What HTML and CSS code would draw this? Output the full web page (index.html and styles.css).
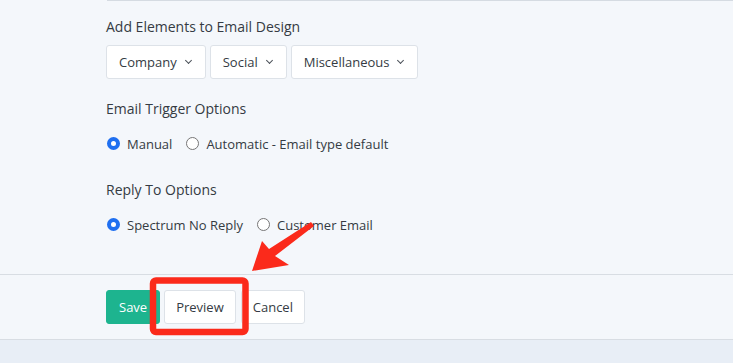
FILE: index.html
```html
<!DOCTYPE html>
<html>
<head>
    <meta charset="UTF-8">
    <title>Email Design</title>
    <link rel="stylesheet" href="styles.css">
</head>
<body>
    <div class="page">
        <div class="top-rule"></div>

        <div class="form">
            <!-- Elementos del diseño -->
            <div class="field-label first">Add Elements to Email Design</div>
            <div class="dropdowns">
                <button class="btn dropdown">Company <span class="caret"></span></button>
                <button class="btn dropdown">Social <span class="caret"></span></button>
                <button class="btn dropdown">Miscellaneous <span class="caret"></span></button>
            </div>

            <!-- Opciones de disparo -->
            <div class="field-label">Email Trigger Options</div>
            <div class="radios">
                <label class="radio"><span class="dot checked"></span>Manual</label>
                <label class="radio"><span class="dot"></span>Automatic - Email type default</label>
            </div>

            <!-- Opciones de respuesta -->
            <div class="field-label">Reply To Options</div>
            <div class="radios">
                <label class="radio"><span class="dot checked"></span>Spectrum No Reply</label>
                <label class="radio"><span class="dot"></span>Customer Email</label>
            </div>
        </div>

        <div class="actions">
            <button class="btn save">Save</button>
            <button class="btn">Preview</button>
            <button class="btn">Cancel</button>
        </div>
    </div>
    <div class="footer"></div>

    <!-- Anotación: recuadro y flecha -->
    <svg class="annotation" width="733" height="363" viewBox="0 0 733 363">
        <rect x="153" y="280.5" width="92.5" height="51.5" rx="3" fill="none" stroke="#fb2a1b" stroke-width="6.5"/>
        <polygon fill="#fb2a1b" points="252,271 262,241 269,249 311,222 314,226 275,256 289,265"/>
    </svg>
</body>
</html>
```

FILE: styles.css
```css
/* Estilos de la página */
body {
    font-family: "Open Sans", Arial, sans-serif;
    background-color: #e8eef6;
    margin: 0;
    padding: 0;
    color: #353b43;
}

.page {
    background-color: #f4f7fb;
    border-bottom: 1px solid #d8dde3;
}

.top-rule {
    margin-left: 107px;
    border-top: 1px solid #d5dbe2;
}

.form {
    padding-left: 106px;
    padding-bottom: 39px;
}

.field-label {
    font-size: 14px;
    line-height: 20px;
    margin-top: 20px;
}

.field-label.first {
    margin-top: 16px;
}

.dropdowns {
    display: flex;
    gap: 4px;
    margin-top: 8px;
}

.btn {
    font-family: "Open Sans", Arial, sans-serif;
    font-size: 13px;
    color: #353b43;
    background-color: #fff;
    border: 1px solid #dde2e8;
    border-radius: 3px;
    height: 34px;
    padding: 0 12px;
    display: flex;
    align-items: center;
}

.dropdown {
    padding-right: 14px;
}

.caret {
    width: 4px;
    height: 4px;
    border-right: 1.3px solid #4a5058;
    border-bottom: 1.3px solid #4a5058;
    transform: rotate(45deg);
    margin: -3px 0 0 9px;
}

.radios {
    display: flex;
    gap: 13px;
    font-size: 13px;
    line-height: 20px;
}

.radios + .field-label {
    margin-top: 26px;
}

.field-label + .radios {
    margin-top: 15px;
}

.radio {
    display: flex;
    align-items: center;
}

.dot {
    box-sizing: border-box;
    width: 13px;
    height: 13px;
    border-radius: 50%;
    border: 1px solid #767676;
    background-color: #fff;
    margin: -1px 7px 0 1px;
}

.dot.checked {
    border: 4px solid #1f6ff0;
    background-color: #fff;
}

.actions {
    border-top: 1px solid #d8dde3;
    display: flex;
    gap: 4px;
    padding: 15px 0 15px 106px;
}

.actions .btn {
    padding: 0 11px;
}

.actions .btn:last-child {
    margin-left: 1px;
}

.actions .save {
    background-color: #1db48f;
    border-color: #1db48f;
    color: #fff;
    padding: 0 12px;
}

.footer {
    height: 24px;
}

.annotation {
    position: absolute;
    top: 0;
    left: 0;
}
```
